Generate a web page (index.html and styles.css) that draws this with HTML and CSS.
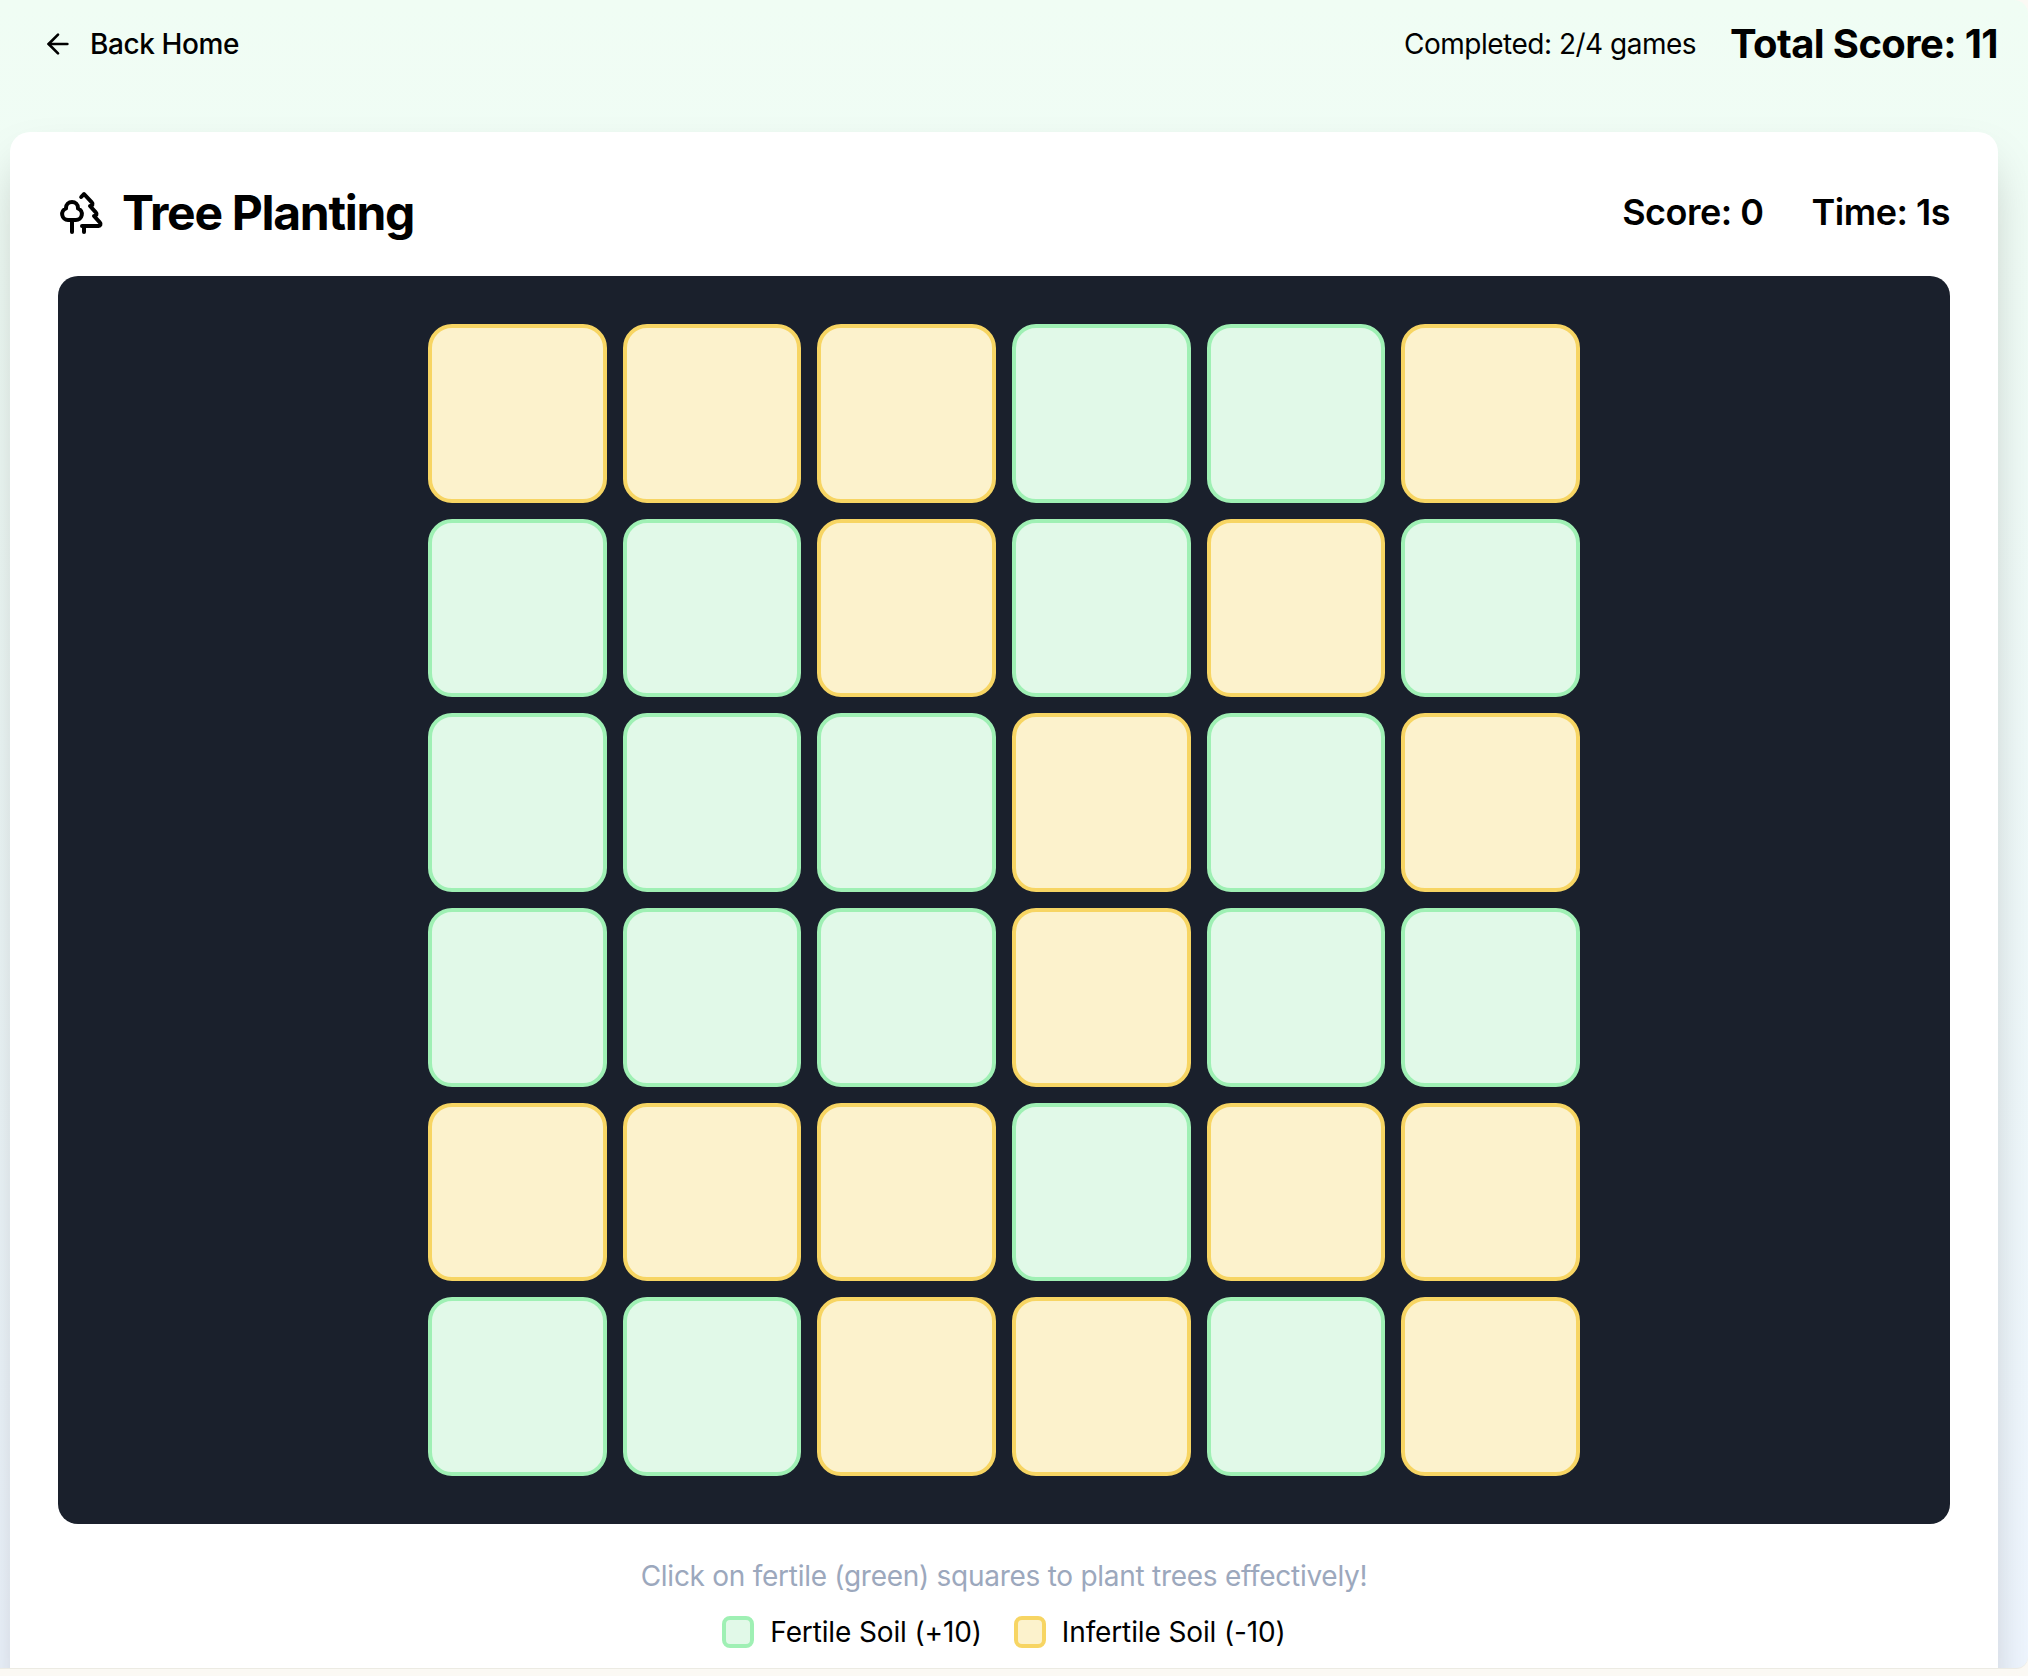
FILE: index.html
```html
<!DOCTYPE html>
<html lang="en">
<head>
<meta charset="utf-8">
<title>Tree Planting</title>
<link rel="stylesheet" href="styles.css">
</head>
<body>
<div class="window">
  <header class="topbar">
    <a class="back" href="#">
      <svg class="icon-back" viewBox="0 0 24 24" fill="none" stroke="currentColor" stroke-width="2" stroke-linecap="round" stroke-linejoin="round"><path d="m12 19-7-7 7-7"/><path d="M19 12H5"/></svg>
      <span>Back Home</span>
    </a>
    <div class="progress">
      <span class="completed">Completed: 2/4 games</span>
      <span class="total">Total Score: 11</span>
    </div>
  </header>
  <main class="card">
    <div class="game-head">
      <h1 class="title">
        <svg class="icon-trees" viewBox="0 0 24 24" fill="none" stroke="currentColor" stroke-width="2" stroke-linecap="round" stroke-linejoin="round"><path d="M10 10v.2A3 3 0 0 1 8.9 16H5a3 3 0 0 1-1-5.8V10a3 3 0 0 1 6 0Z"/><path d="M7 16v6"/><path d="M13 19v3"/><path d="M12 19h8.3a1 1 0 0 0 .7-1.7L18 14h.3a1 1 0 0 0 .7-1.7L16 9h.2a1 1 0 0 0 .8-1.7L13 3l-1.4 1.5"/></svg>
        <span>Tree Planting</span>
      </h1>
      <div class="stats"><span>Score: 0</span><span>Time: 1s</span></div>
    </div>
    <section class="board">
      <div class="grid">
        <div class="cell bad"></div><div class="cell bad"></div><div class="cell bad"></div><div class="cell good"></div><div class="cell good"></div><div class="cell bad"></div>
        <div class="cell good"></div><div class="cell good"></div><div class="cell bad"></div><div class="cell good"></div><div class="cell bad"></div><div class="cell good"></div>
        <div class="cell good"></div><div class="cell good"></div><div class="cell good"></div><div class="cell bad"></div><div class="cell good"></div><div class="cell bad"></div>
        <div class="cell good"></div><div class="cell good"></div><div class="cell good"></div><div class="cell bad"></div><div class="cell good"></div><div class="cell good"></div>
        <div class="cell bad"></div><div class="cell bad"></div><div class="cell bad"></div><div class="cell good"></div><div class="cell bad"></div><div class="cell bad"></div>
        <div class="cell good"></div><div class="cell good"></div><div class="cell bad"></div><div class="cell bad"></div><div class="cell good"></div><div class="cell bad"></div>
      </div>
    </section>
    <p class="hint">Click on fertile (green) squares to plant trees effectively!</p>
    <div class="legend">
      <div class="legend-item"><span class="swatch good"></span><span>Fertile Soil (+10)</span></div>
      <div class="legend-item"><span class="swatch bad"></span><span>Infertile Soil (-10)</span></div>
    </div>
  </main>
</div>
</body>
</html>
```
FILE: styles.css
```css
* { box-sizing: border-box; }
html, body { margin: 0; height: 100%; }
body {
  background: #fbf9f4;
  font-family: Inter, "Liberation Sans", sans-serif;
  color: #000;
  overflow: hidden;
}
.window {
  height: 1669px;
  padding: 0 30px 0 10px;
  background: linear-gradient(180deg, #f0fdf4 0%, #eff6ff 100%);
  border-bottom: 1px solid #ecebe3;
  border-radius: 0 14px 12px 0;
  overflow: hidden;
}
.topbar {
  height: 132px;
  display: flex;
  justify-content: space-between;
  align-items: flex-start;
  padding: 22px 0 0 30px;
}
.back {
  display: flex;
  align-items: center;
  gap: 16px;
  height: 44px;
  margin-left: 2px;
  color: #000;
  text-decoration: none;
  font-size: 28px;
  font-weight: 500;
  letter-spacing: -0.4px;
}
.icon-back { width: 32px; height: 32px; }
.progress {
  display: flex;
  align-items: center;
  gap: 34px;
  height: 44px;
}
.completed { font-size: 28px; letter-spacing: -0.5px; }
.total { margin-top: -2px; font-size: 40px; font-weight: 700; letter-spacing: -0.62px; }
.card {
  background: #fff;
  border-radius: 20px;
  padding: 48px;
  box-shadow: 0 25px 50px -12px rgba(0, 0, 0, 0.25);
}
.game-head {
  height: 96px;
  display: flex;
  justify-content: space-between;
  align-items: flex-start;
}
.title {
  margin: 0;
  height: 64px;
  display: flex;
  align-items: center;
  gap: 16px;
  font-size: 48px;
  font-weight: 700;
  letter-spacing: -1.3px;
}
.icon-trees { width: 48px; height: 48px; }
.stats {
  height: 64px;
  display: flex;
  align-items: center;
  gap: 48px;
  font-size: 36px;
  font-weight: 600;
  letter-spacing: -0.5px;
}
.board {
  background: #1a202c;
  border-radius: 20px;
  padding: 48px;
}
.grid {
  max-width: 1152px;
  margin: 0 auto;
  display: grid;
  grid-template-columns: repeat(6, 1fr);
  gap: 16px;
}
.cell {
  aspect-ratio: 1;
  border-width: 4px;
  border-style: solid;
  border-radius: 24px;
}
.good { background: #e1f9e8; border-color: #9ff0b4; }
.bad { background: #fcf2cc; border-color: #f7d563; }
.hint {
  margin: 32px 0 0;
  text-align: center;
  font-size: 28px;
  line-height: 40px;
  letter-spacing: -0.27px;
  color: #9ca8bd;
}
.legend {
  margin-top: 16px;
  display: flex;
  justify-content: center;
  gap: 32px;
}
.legend-item {
  display: flex;
  align-items: center;
  gap: 16px;
  font-size: 28px;
  line-height: 40px;
  letter-spacing: -0.13px;
}
.swatch {
  width: 32px;
  height: 32px;
  border-width: 4px;
  border-style: solid;
  border-radius: 8px;
}
```
